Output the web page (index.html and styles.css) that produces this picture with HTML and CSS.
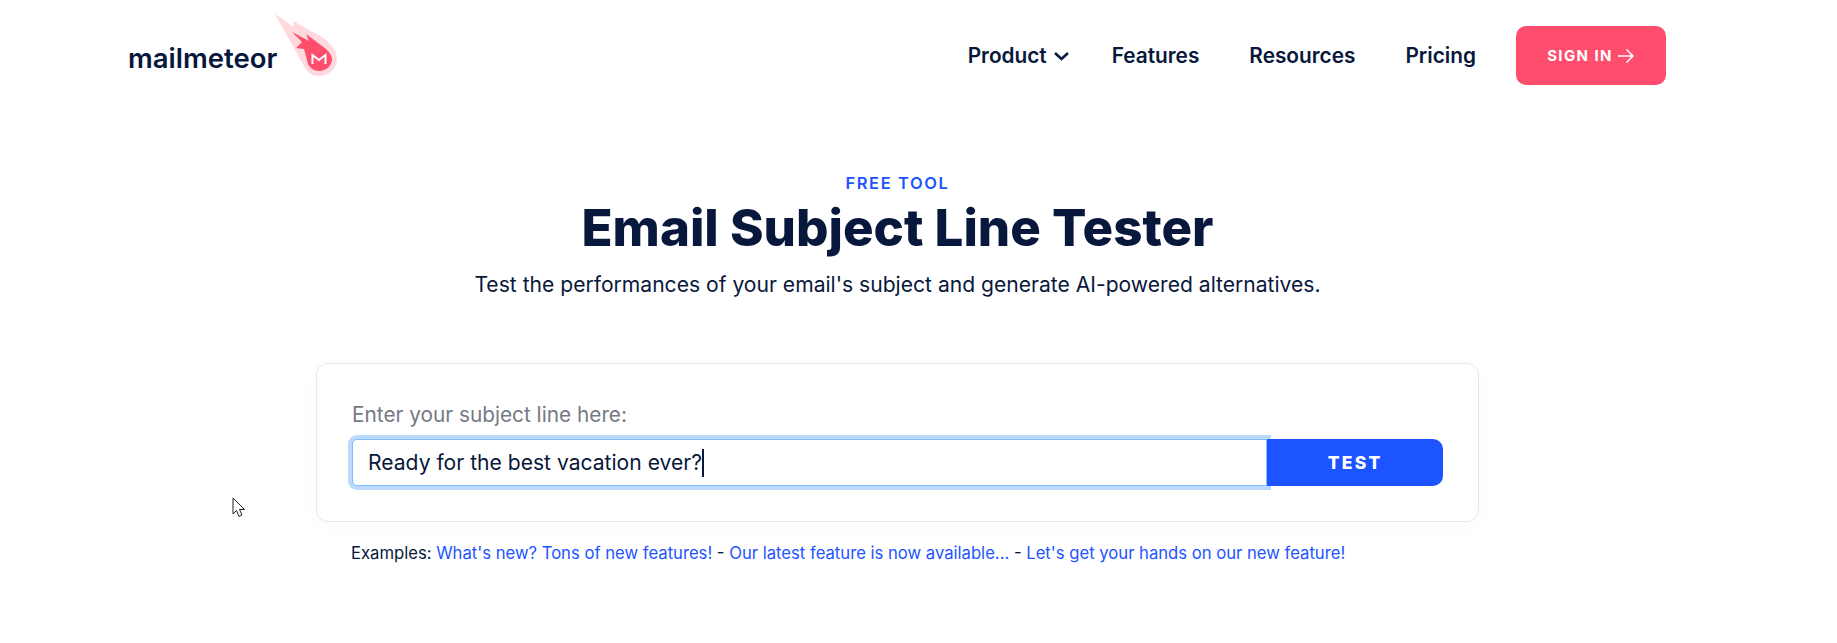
FILE: index.html
```html
<!DOCTYPE html>
<html lang="en">
<head>
    <meta charset="UTF-8">
    <meta name="viewport" content="width=device-width, initial-scale=1.0">
    <title>Email Subject Line Tester</title>
    <link rel="stylesheet" href="styles.css">
</head>
<body>

    <!-- Navbar -->
    <div class="navbar">
        <a class="logo" href="#">
            <span class="logo-text">mailmeteor</span>
            <svg class="logo-icon" width="66" height="66" viewBox="0 0 66 66">
                <path fill="#ffd9de" d="M2 2 L21 15 L20 9 L49 25 C58 32 64 38 64 47 C64 57 55 64 46 64 C40 64 35 61 32 56 Z"/>
                <path fill="#ff4d6d" d="M19 20 L36 29 L33 22 L53 37 C57 41 59 44 59 47 C59 54 53 59 46 59 C41 59 37 56 35 52 L31 37 L23 36 L29 30 Z"/>
                <path fill="none" stroke="#fff" stroke-width="2" d="M39.5 52 V43 L46 48 L52.5 43 V52"/>
            </svg>
        </a>
        <div class="nav-links">
            <a class="nav-link nav-product" href="#">Product
                <svg width="17" height="10" viewBox="0 0 17 10"><path fill="none" stroke="#08183c" stroke-width="2.6" d="M2 2 L8.5 8 L15 2"/></svg>
            </a>
            <a class="nav-link nav-features" href="#">Features</a>
            <a class="nav-link nav-resources" href="#">Resources</a>
            <a class="nav-link nav-pricing" href="#">Pricing</a>
            <a class="signin-btn" href="#">SIGN IN
                <svg width="18" height="16" viewBox="0 0 18 16"><path fill="none" stroke="#fff" stroke-width="1.5" d="M1 8 H16 M9.5 1.5 L16 8 L9.5 14.5"/></svg>
            </a>
        </div>
    </div>

    <!-- Heading -->
    <div class="hero">
        <div class="eyebrow">FREE TOOL</div>
        <h1>Email Subject Line Tester</h1>
        <p class="subtitle">Test the performances of your email's subject and generate AI-powered alternatives.</p>
    </div>

    <!-- Tester card -->
    <div class="tester-card">
        <label class="tester-label">Enter your subject line here:</label>
        <div class="tester-row">
            <div class="subject-input">Ready for the best vacation ever?<span class="caret"></span></div>
            <button class="test-btn">TEST</button>
        </div>
    </div>

    <p class="examples">Examples:
        <a href="#">What's new? Tons of new features!</a> -
        <a href="#">Our latest feature is now available...</a> -
        <a href="#">Let's get your hands on our new feature!</a>
    </p>

    <!-- Mouse pointer in the screenshot -->
    <svg class="pointer" width="14" height="22" viewBox="0 0 14 22">
        <path fill="#fff" stroke="#222" stroke-width="1" d="M1 1 V17 L4.5 13.5 L7 19.5 L10 18 L7.5 12.5 L12.5 12.5 Z"/>
    </svg>

</body>
</html>
```

FILE: styles.css
```css
* {
    margin: 0;
    padding: 0;
    box-sizing: border-box;
    font-family: Inter, "Open Sans", sans-serif;
}

body {
    background: #fff;
    color: #08183c;
    height: 643px;
    overflow: hidden;
    position: relative;
}

a {
    text-decoration: none;
}

/* Navbar */
.navbar {
    display: flex;
    justify-content: space-between;
    align-items: flex-start;
    width: 1538px;
    margin-left: 128px;
    height: 128px;
    padding-top: 13px;
}

.logo {
    display: flex;
    align-items: flex-start;
}

.logo-text {
    font-size: 27.5px;
    font-weight: 600;
    color: #08183c;
    margin-top: 28px;
}

.logo-icon {
    margin-left: -4px;
    margin-top: -1px;
}

.nav-links {
    display: flex;
    align-items: center;
    margin-top: 13px;
}

.nav-link {
    display: flex;
    align-items: center;
    font-size: 20.8px;
    font-weight: 600;
    color: #08183c;
}

.nav-product svg {
    margin-left: 6px;
}

.nav-features {
    margin-left: 42px;
}

.nav-resources {
    margin-left: 50px;
}

.nav-pricing {
    margin-left: 50px;
}

.signin-btn {
    display: flex;
    align-items: center;
    justify-content: center;
    gap: 4px;
    width: 150px;
    height: 59px;
    margin-left: 40px;
    background: #ff4d6d;
    border-radius: 10px;
    color: #fff;
    font-size: 15px;
    font-weight: 700;
    letter-spacing: 1.4px;
}

/* Heading */
.hero {
    width: 1163px;
    margin-left: 316px;
    text-align: center;
}

.eyebrow {
    font-size: 16.5px;
    font-weight: 600;
    letter-spacing: 1.6px;
    color: #1c54ff;
    line-height: 20px;
    margin-top: 45px;
}

h1 {
    font-size: 51px;
    font-weight: 800;
    line-height: 60px;
    margin-top: 5px;
}

.subtitle {
    font-size: 21.1px;
    line-height: 30px;
    margin-top: 12px;
}

/* Tester card */
.tester-card {
    width: 1163px;
    height: 159px;
    margin: 63px 0 0 316px;
    padding: 36px 35px 0;
    background: #fff;
    border: 1px solid #e8e8e8;
    border-radius: 12px;
    box-shadow: 0 4px 24px rgba(0, 0, 0, 0.02);
}

.tester-label {
    display: block;
    font-size: 20.8px;
    line-height: 30px;
    color: #757a85;
}

.tester-row {
    display: flex;
    margin-top: 9px;
}

.subject-input {
    display: flex;
    align-items: center;
    width: 916px;
    height: 47px;
    padding-left: 15px;
    font-size: 21.1px;
    background: #fff;
    border: 1px solid #80bdff;
    border-radius: 5px 0 0 5px;
    box-shadow: 0 0 0 4px #bbdafc;
}

.caret {
    width: 2px;
    height: 28px;
    background: #08183c;
}

.test-btn {
    width: 176px;
    height: 47px;
    background: #1c54ff;
    border: none;
    border-radius: 0 10px 10px 0;
    color: #fff;
    font-size: 17.5px;
    font-weight: 800;
    letter-spacing: 2.2px;
}

/* Examples */
.examples {
    margin: 19px 0 0 351px;
    font-size: 16.65px;
    line-height: 24px;
}

.examples a {
    color: #1c54ff;
}

.pointer {
    position: absolute;
    left: 232px;
    top: 497px;
}
```
